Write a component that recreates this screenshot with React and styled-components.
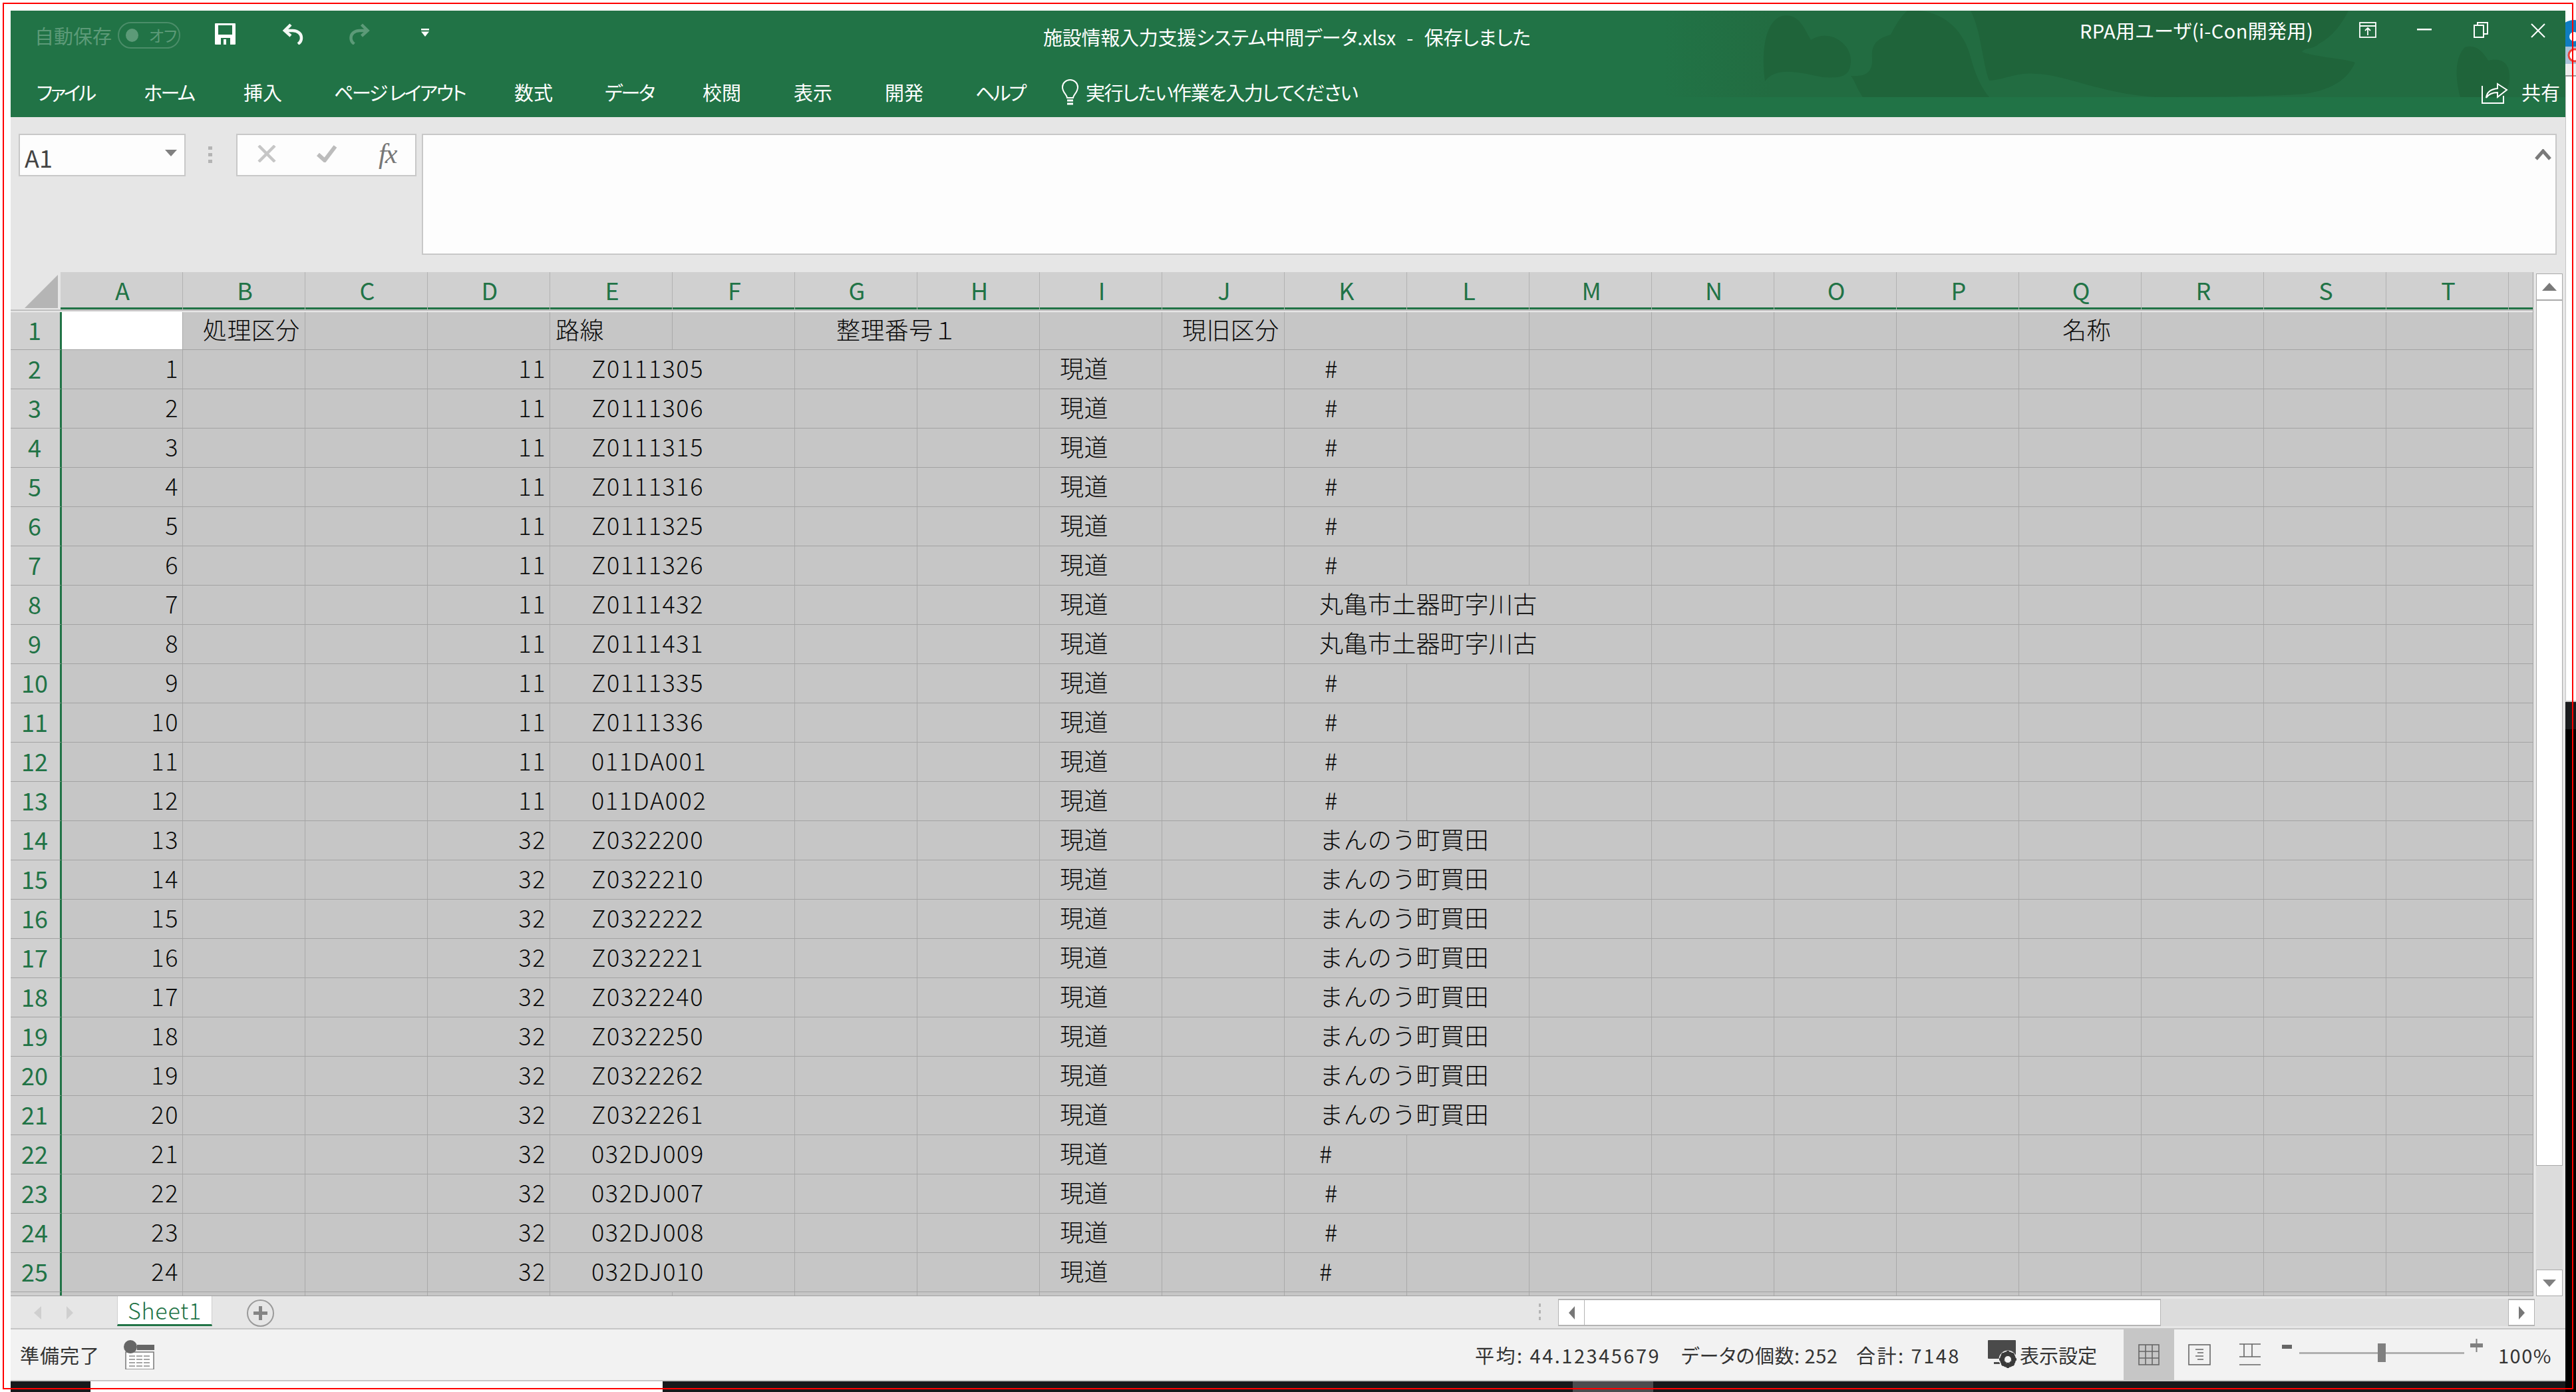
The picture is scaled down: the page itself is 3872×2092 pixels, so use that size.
import React from 'react';
import styled, { createGlobalStyle } from 'styled-components';

const FONT = '"Noto Sans CJK JP", "Noto Sans", sans-serif';

const Global = createGlobalStyle`
  html, body { margin: 0; padding: 0; background: #fff; }
  * { box-sizing: border-box; }
`;

const Page = styled.div`
  position: relative;
  width: 3872px;
  height: 2092px;
  background: #fff;
  overflow: hidden;
  font-family: ${FONT};
  display: grid;
  grid-template-columns: 16px 3840px 16px;
  grid-template-rows: 16px 2060px 16px;
`;
const RedFrame = styled.div`
  position: absolute;
  left: 4px; top: 4px; width: 3864px; height: 2084px;
  border: 2px solid #ff0000;
  pointer-events: none;
  z-index: 20;
`;
const Win = styled.div`
  grid-column: 2; grid-row: 2;
  display: flex; flex-direction: column;
  background: #e6e6e6;
`;
const RightEdge = styled.div`
  grid-column: 3; grid-row: 1 / 4;
  display: flex; flex-direction: column;
  background: #fff;
`;
const EdgeWhite = styled.div`
  height: 940px; background: #fff; border-left: 1px solid #c6c6c6; border-bottom: 2px solid #c6c6c6;
`;
const EdgeDark = styled.div`height: 41px; background: #1a1c1e;`;
const EdgeBlack = styled.div`flex: 1; background: #000;`;
const BottomStrip = styled.div`
  grid-column: 2; grid-row: 3;
  display: flex;
`;
const Strip = styled.div`
  width: ${p => p.$w}px;
  flex: ${p => (p.$grow ? 1 : 'none')};
  background: ${p => p.$c};
`;

/* ribbon */
const Ribbon = styled.div`
  position: relative;
  height: 160px;
  background: #217346;
  color: #fff;
  padding-bottom: 4px;
  font-feature-settings: "palt";
`;
const Texture = styled.svg`
  position: absolute; left: 2484px; top: 0; width: 1356px; height: 130px;
`;
const TitleRow = styled.div`
  position: relative;
  height: 64px;
  display: flex; align-items: center;
`;
const Qat = styled.div`
  width: 1552px; flex: none;
  padding-left: 36px;
  display: flex; align-items: center;
`;
const AutoLabel = styled.span`font-size: 29px; color: #5c9a78; width: 117px; white-space: nowrap; line-height: 1; padding-top: 10px;`;
const Toggle = styled.span`
  margin-left: 8px; margin-top: 10px; width: 94px; height: 40px; flex: none;
  border: 2px solid #4b8d69; border-radius: 20px;
  display: flex; align-items: center; padding-left: 10px; gap: 16px;
`;
const ToggleDot = styled.span`width: 19px; height: 20px; border-radius: 50%; background: #5c9a78;`;
const ToggleText = styled.span`font-size: 24px; color: #5c9a78; line-height: 1;`;
const QatSlot = styled.span`
  margin-left: ${p => p.$ml}px; display: flex; flex: none; margin-top: ${p => p.$mt || 6}px;
`;
const DocTitle = styled.div`
  flex: none; width: 1558px; font-size: 29px; white-space: pre; line-height: 1;
  padding-top: 14px; letter-spacing: -0.25px; word-spacing: 2px;
`;
const UserName = styled.div`
  flex: none; width: 420px; font-size: 29px; white-space: nowrap; line-height: 1; padding-bottom: 6px;
  letter-spacing: 0.4px;
`;
const WinBtn = styled.span`
  display: flex; flex: none; margin-left: ${p => p.$ml}px; padding-bottom: 6px;
`;
const TabRow = styled.div`
  position: relative;
  margin-top: 24px; height: 68px;
  padding-left: 39px;
  display: flex; align-items: center;
`;
const Tab = styled.span`
  flex: none; width: ${p => p.$w}px; margin-right: 77px;
  font-size: 29px; line-height: 1; white-space: nowrap;
  letter-spacing: ${p => p.$ls || 0}px;
`;
const Bulb = styled.span`display: flex; margin-left: -23px; margin-right: 10px; padding-top: 2px;`;
const Tell = styled.span`font-size: 29px; line-height: 1; white-space: nowrap; flex: none; letter-spacing: -1.5px;`;
const Share = styled.div`
  margin-left: auto; display: flex; align-items: center; gap: 20px; padding-right: 8px;
  font-size: 29px; line-height: 1;
`;

/* formula */
const FormulaBar = styled.div`
  height: 233px; flex: none;
  background: #e6e6e6;
  padding: 25px 13px 0 12px;
  display: flex; align-items: flex-start;
`;
const NameBox = styled.div`
  width: 251px; height: 64px; flex: none;
  background: #fdfdfd; border: 2px solid #c8c8c8;
  display: flex; align-items: center; justify-content: space-between;
  padding: 5px 11px 0 7px;
  font-size: 36px; color: #444; line-height: 1;
`;
const Caret = styled.span`
  width: 0; height: 0; margin-top: -11px;
  border-left: 9px solid transparent; border-right: 9px solid transparent;
  border-top: 10px solid #808080;
`;
const Grip = styled.div`
  width: 6px; margin: 19px 36px 0 34px; flex: none;
  display: flex; flex-direction: column; gap: 5px;
`;
const GripDot = styled.span`height: 5px; background: #b4b4b4; display: block;`;
const FxBox = styled.div`
  width: 271px; height: 64px; flex: none;
  background: #fdfdfd; border: 2px solid #c8c8c8;
  display: flex; align-items: center; padding-left: 30px; padding-bottom: 4px;
`;
const FxSpacer = styled.span`width: 60px; flex: none;`;
const FxText = styled.span`
  font-family: "Liberation Serif", serif; font-style: italic; font-size: 42px; color: #777;
  margin-left: 62px; line-height: 1; letter-spacing: -2px;
`;
const FormulaInput = styled.div`
  margin-left: 8px; flex: none; width: 3209px; height: 182px;
  background: #fdfdfd; border: 2px solid #c8c8c8;
  display: flex; justify-content: flex-end; padding: 21px 6px 0 0;
`;

/* sheet */
const SheetArea = styled.div`
  height: 1539px; flex: none; display: flex;
`;
const GridPane = styled.div`
  width: 3792px; flex: none; overflow: hidden; background: #c6c6c6;
  border-right: 1px solid #a3a3a3;
  border-bottom: 1px solid #a3a3a3;
  font-size: 36px; color: #0a0a0a;
`;
const HeadRow = styled.div`
  display: grid; grid-template-columns: 75px repeat(20, 184px) 37px;
  height: 60px;
  background: #d0d0d0;
  border-bottom: 4px solid transparent;
  background-clip: padding-box;
  box-shadow: inset 0 -3px 0 #217346;
`;
const Corner = styled.div`
  background: #e6e6e6; height: 56px; padding: 4px 4px 2px 21px;
  display: flex;
`;
const CornerTri = styled.span`
  flex: 1; background: #b5b5b5; clip-path: polygon(100% 0, 100% 100%, 0 100%);
`;
const ColHead = styled.div`
  height: 56px; border-right: 1px solid #b2b2b2;
  color: #217346; font-size: 36px; line-height: 1;
  display: flex; align-items: center; justify-content: center; padding: 0 0 4px 3px;
`;
const WhiteLine = styled.div`height: 1px; background: #fff; margin: -1px 0 0 0; position: relative;`;
const Row = styled.div`
  display: grid; grid-template-columns: 75px repeat(20, 184px) 37px;
  height: ${p => p.$h}px;
  border-bottom: 1px solid #a3a3a3;
`;
const RowHead = styled.div`
  position: relative; z-index: 2;
  width: 77px; background: #d0d0d0;
  margin-bottom: -1px;
  border-bottom: 1px solid #a3a3a3;
  border-right: 3px solid #217346;
  color: #217346; line-height: 1;
  display: flex; align-items: center; justify-content: center;
  padding: 0 2px 5px 0;
`;
const Cell = styled.div`
  position: relative;
  min-width: 0;
  background: ${p => (p.$sel ? '#fff' : 'transparent')};
  border-right: ${p => (p.$joined ? 'none' : '1px solid #a9a9a9')};
  display: flex; align-items: center;
  justify-content: ${p => (p.$right ? 'flex-end' : 'flex-start')};
  padding: 0 ${p => (p.$right ? 5 : 0)}px 6px ${p => p.$pad || 0}px;
  white-space: nowrap; line-height: 1;
`;
const CellText = styled.span`
  position: relative; z-index: 1; font-weight: 300;
  letter-spacing: ${p => (p.$num ? 1.6 : 0.4)}px;
`;

const VScroll = styled.div`
  width: 48px; flex: none; background: #e6e6e6;
  padding: 2px 4px 0 4px;
  display: flex; flex-direction: column;
`;
const ScrollBtn = styled.div`
  height: ${p => p.$h}px; flex: none; background: #fff;
  border: 1px solid #a9a9a9;
  border-bottom-width: ${p => (p.$up ? 2 : 1)}px;
  display: flex; align-items: center; justify-content: center;
`;
const TriUp = styled.span`
  width: 0; height: 0;
  border-left: 11px solid transparent; border-right: 11px solid transparent;
  border-bottom: 12px solid #7a7a7a;
`;
const TriDown = styled.span`
  width: 0; height: 0;
  border-left: 10px solid transparent; border-right: 10px solid transparent;
  border-top: 11px solid #808080;
`;
const VThumb = styled.div`
  height: 1300px; flex: none; background: #fff;
  border: 1px solid #a9a9a9; border-top: none;
`;
const VTrack = styled.div`flex: 1; background: #dcdcdc;`;

/* tabs */
const TabsBar = styled.div`
  height: 48px; flex: none; display: flex; align-items: flex-start;
  background: #e6e6e6; position: relative;
`;
const NavArrow = styled.span`
  width: 0; height: 0; flex: none;
  margin: 15px 0 0 ${p => p.$ml}px;
  border-top: 10px solid transparent; border-bottom: 10px solid transparent;
  ${p => (p.$left ? 'border-right: 11px solid #cfcfcf;' : 'border-left: 10px solid #cfcfcf;')}
`;
const SheetTab = styled.div`
  margin-left: 66px; width: 143px; height: 45px; flex: none;
  background: #fff; border: 1px solid #cfcfcf; border-top: none;
  border-bottom: 3px solid #217346;
  color: #217346; font-size: 34px; line-height: 1; font-weight: 300; letter-spacing: 0.8px;
  display: flex; align-items: center; justify-content: center;
`;
const AddSheet = styled.span`margin: 5px 0 0 52px; display: flex; flex: none;`;
const HGrip = styled.span`
  margin: 11px 26px 0 auto; width: 3px; height: 25px; flex: none;
  background: repeating-linear-gradient(#b4b4b4 0 5px, transparent 5px 10px);
`;
const HScroll = styled.div`
  width: 1468px; height: 41px; flex: none; margin: 4px 46px 0 0;
  display: flex; background: #dcdcdc;
`;
const HBtn = styled.div`
  width: ${p => p.$w}px; flex: none; background: #fff;
  border: 1px solid #b4b4b4; border-top-width: 2px; border-bottom-width: 2px;
  display: flex; align-items: center; justify-content: center;
`;
const HThumb = styled.div`
  width: 866px; flex: none; background: #fff;
  border: 1px solid #b4b4b4; border-top-width: 2px; border-bottom-width: 2px; border-left: none;
`;
const HTrack = styled.div`flex: 1;`;
const HTri = styled.span`
  width: 0; height: 0;
  border-top: 10px solid transparent; border-bottom: 10px solid transparent;
  ${p => (p.$left ? 'border-right: 9px solid #777;' : 'border-left: 9px solid #777;')}
`;

/* status */
const StatusBar = styled.div`
  height: 80px; flex: none; background: #f2f2f2;
  border-top: 2px solid #c6c6c6; border-bottom: 2px solid #c6c6c6;
  display: flex; align-items: center;
  font-size: 29px; color: #333; line-height: 1;
  font-feature-settings: "palt";
  padding-left: 14px;
`;
const StatusText = styled.span`
  flex: none; white-space: nowrap; width: ${p => p.$w}px; margin-left: ${p => p.$ml || 0}px;
  letter-spacing: ${p => p.$ls || 0}px;
`;
const StatusIcon = styled.span`
  display: flex; flex: none; margin-left: ${p => p.$ml || 0}px; margin-top: ${p => p.$mt || 0}px;
`;
const ViewActive = styled.div`
  width: 76px; height: 76px; flex: none; margin-left: ${p => p.$ml}px;
  background: #c6c6c6; display: flex; align-items: center; justify-content: center;
`;
const Zoom = styled.span`margin-left: ${p => p.$ml}px; flex: none; white-space: nowrap; letter-spacing: 1.5px;`;
const Slider = styled.div`
  position: relative; width: 248px; height: 3px; flex: none; margin-left: 11px;
  margin-top: -6px;
  background: #b0b0b0;
`;
const SliderThumb = styled.span`
  position: absolute; left: 118px; top: -13px; width: 12px; height: 28px; background: #808080;
`;

const COLS = 'ABCDEFGHIJKLMNOPQRST'.split('');
const ids = ['Z0111305','Z0111306','Z0111315','Z0111316','Z0111325','Z0111326','Z0111432','Z0111431','Z0111335','Z0111336','011DA001','011DA002','Z0322200','Z0322210','Z0322222','Z0322221','Z0322240','Z0322250','Z0322262','Z0322261','032DJ009','032DJ007','032DJ008','032DJ010'];
const nameOf = i => {
  if (i === 6 || i === 7) return '丸亀市土器町字川古';
  if (i >= 12 && i <= 19) return 'まんのう町買田';
  return '#';
};

const header = { 1: ['処理区分', 30], 4: ['路線', 8], 6: ['整理番号１', 62], 9: ['現旧区分', 30], 16: ['名称', 65] };

function HeaderRow() {
  return (
    <Row $h={57}>
      <RowHead>1</RowHead>
      {COLS.map((c, i) => (
        <Cell key={c} $sel={i === 0} $joined={i === 6} $pad={header[i] ? header[i][1] : 0}>
          {header[i] && <CellText>{header[i][0]}</CellText>}
        </Cell>
      ))}
      <Cell />
    </Row>
  );
}

function DataRow({ i }) {
  const name = nameOf(i);
  const hashPad = i === 20 || i === 23 ? 52 : 60;
  const joinKL = name !== '#';
  const joinLM = i === 6 || i === 7;
  return (
    <Row $h={59}>
      <RowHead>{i + 2}</RowHead>
      {COLS.map((c, k) => {
        if (k === 0) return <Cell key={c} $right><CellText $num>{i + 1}</CellText></Cell>;
        if (k === 3) return <Cell key={c} $right><CellText $num>{i < 12 ? 11 : 32}</CellText></Cell>;
        if (k === 4) return <Cell key={c} $joined $pad={62}><CellText $num>{ids[i]}</CellText></Cell>;
        if (k === 8) return <Cell key={c} $pad={30}><CellText>現道</CellText></Cell>;
        if (k === 10) return <Cell key={c} $joined={joinKL} $pad={name === '#' ? hashPad : 52}><CellText>{name}</CellText></Cell>;
        if (k === 11) return <Cell key={c} $joined={joinLM} />;
        return <Cell key={c} />;
      })}
      <Cell />
    </Row>
  );
}

const SaveIcon = () => (
  <svg width="31" height="32" viewBox="0 0 31 32">
    <path fill="#fff" d="M1 0h29a1 1 0 0 1 1 1v30a1 1 0 0 1-1 1H1a1 1 0 0 1-1-1V1a1 1 0 0 1 1-1z" />
    <rect x="5" y="3" width="21" height="14" fill="#217346" />
    <rect x="9" y="22" width="14" height="10" fill="#217346" />
    <rect x="13" y="24" width="4" height="8" fill="#fff" />
  </svg>
);
const UndoIcon = ({ c }) => (
  <svg width="32" height="32" viewBox="0 0 32 32" fill="none" stroke={c} strokeWidth="4.5">
    <path d="M13 2 L4 11 L13 19" />
    <path d="M5 11 H16 C24 11 29 16 29 22 C29 26 27 29 24 31" />
  </svg>
);
const RedoIcon = ({ c }) => (
  <svg width="33" height="32" viewBox="0 0 32 32" fill="none" stroke={c} strokeWidth="4.5">
    <path d="M19 2 L28 11 L19 19" />
    <path d="M27 11 H16 C8 11 3 16 3 22 C3 26 5 29 8 31" />
  </svg>
);
const CustomizeIcon = () => (
  <svg width="12" height="12" viewBox="0 0 12 12">
    <rect x="0" y="0" width="12" height="2.5" fill="#fff" />
    <path d="M0 4.5H12L6 12Z" fill="#fff" />
  </svg>
);
const DisplayIcon = () => (
  <svg width="26" height="24" viewBox="0 0 26 24" fill="none" stroke="#fff" strokeWidth="1.8">
    <rect x="1" y="1" width="24" height="22" />
    <path d="M1 6H25M13 20V10M9 13l4-4 4 4" />
  </svg>
);
const MinIcon = () => (
  <svg width="22" height="24" viewBox="0 0 22 24"><rect x="0" y="10" width="22" height="2.5" fill="#fff" /></svg>
);
const RestoreIcon = () => (
  <svg width="22" height="24" viewBox="0 0 22 24" fill="none" stroke="#fff" strokeWidth="2">
    <rect x="1" y="5" width="14" height="18" />
    <path d="M6 5V1H21V18H15" />
  </svg>
);
const CloseIcon = () => (
  <svg width="22" height="24" viewBox="0 0 22 24" fill="none" stroke="#fff" strokeWidth="2">
    <path d="M1 3L21 23M21 3L1 23" />
  </svg>
);
const ShareIcon = () => (
  <svg width="40" height="36" viewBox="0 0 40 36" fill="none" stroke="#fff" strokeWidth="2">
    <path d="M1 9V35H33V24" />
    <path d="M7 27C8 18 14 14 24 13V6L38 15L24 26V19C17 19 11 21 7 27Z" />
  </svg>
);
const BulbIcon = () => (
  <svg width="27" height="40" viewBox="0 0 27 40" fill="none" stroke="#fff" strokeWidth="2">
    <path d="M9 28C8 22 2 20 2 12C2 6 7 1 13.5 1S25 6 25 12C25 20 19 22 18 28Z" />
    <path d="M9 32H18M9 37H18" strokeWidth="3" />
  </svg>
);
const CrossIcon = () => (
  <svg width="28" height="26" viewBox="0 0 28 26" fill="none" stroke="#c6c6c6" strokeWidth="4.5">
    <path d="M2 1L26 25M26 1L2 25" />
  </svg>
);
const CheckIcon = () => (
  <svg width="32" height="26" viewBox="0 0 32 26" fill="none" stroke="#bcbcbc" strokeWidth="6">
    <path d="M3 14L13 23L29 2" />
  </svg>
);
const ChevronUp = () => (
  <svg width="25" height="17" viewBox="0 0 25 17" fill="none" stroke="#7a7a7a" strokeWidth="5">
    <path d="M2 15L12.5 3L23 15" />
  </svg>
);
const AddIcon = () => (
  <svg width="41" height="41" viewBox="0 0 41 41">
    <circle cx="20.5" cy="20.5" r="19.5" fill="none" stroke="#9a9a9a" strokeWidth="2" />
    <path d="M20.5 10V31M10 20.5H31" stroke="#858585" strokeWidth="5" />
  </svg>
);
const MacroIcon = () => (
  <svg width="46" height="44" viewBox="0 0 46 44">
    <rect x="3" y="18" width="42" height="26" fill="#fff" stroke="#777" strokeWidth="1.5" />
    <path d="M8 24H41M8 29H41M8 34H41M8 39H41" stroke="#888" strokeWidth="1.5" strokeDasharray="9 2" />
    <rect x="20" y="7" width="26" height="8" fill="#666" />
    <ellipse cx="10" cy="10" rx="10" ry="10" fill="#666" />
  </svg>
);
const DisplaySettingsIcon = () => (
  <svg width="48" height="44" viewBox="0 0 48 44">
    <rect x="0" y="0" width="42" height="28" rx="1" fill="#4a4a4a" />
    <rect x="9" y="33" width="9" height="3" fill="#4a4a4a" />
    <circle cx="30" cy="29" r="10" fill="none" stroke="#f2f2f2" strokeWidth="7" />
    <circle cx="30" cy="29" r="9" fill="none" stroke="#3a3a3a" strokeWidth="6" />
    <path d="M30 16V42M17 29H43M21 20L39 38M39 20L21 38" stroke="#3a3a3a" strokeWidth="3.5" />
    <circle cx="30" cy="29" r="5" fill="#f2f2f2" />
  </svg>
);
const NormalIcon = () => (
  <svg width="32" height="32" viewBox="0 0 32 32" fill="none" stroke="#666" strokeWidth="1.6">
    <rect x="1" y="1" width="30" height="30" />
    <path d="M1 11H31M1 21H31M11 1V31M21 1V31" />
  </svg>
);
const LayoutIcon = () => (
  <svg width="34" height="32" viewBox="0 0 34 32" fill="none" stroke="#666" strokeWidth="1.6">
    <rect x="1" y="1" width="32" height="30" />
    <path d="M11 8H23M14 13H23M11 18H23M14 23H23" />
  </svg>
);
const BreakIcon = () => (
  <svg width="34" height="34" viewBox="0 0 34 34" fill="none" stroke="#666" strokeWidth="1.6">
    <path d="M1 1H33M1 20H33M1 32H33M8 1V20M20 1V20" />
  </svg>
);
const MinusSmall = () => (
  <svg width="15" height="6" viewBox="0 0 15 6"><rect width="15" height="6" fill="#666" /></svg>
);
const PlusSmall = () => (
  <svg width="19" height="20" viewBox="0 0 19 20"><path d="M0 7h19v6H0zM8.5 0h2v20h-2z" fill="#808080" /></svg>
);
const Blobs = () => (
  <Texture viewBox="0 0 1356 130" preserveAspectRatio="none">
    <defs>
      <linearGradient id="fade" x1="0" x2="1" y1="0" y2="0">
        <stop offset="0" stopColor="#217346" />
        <stop offset="0.12" stopColor="#226c41" />
      </linearGradient>
    </defs>
    <rect x="0" y="0" width="1356" height="130" fill="url(#fade)" />
    <path fill="#1f643a" d="M153 106C148 70 150 18 178 8C205 2 213 30 222 44C250 26 282 50 282 74C282 98 270 102 240 100C200 92 170 84 153 106Z" />
    <path fill="#1f643a" d="M367 0C420 -4 452 30 462 70C470 100 480 118 490 130H300C290 115 288 105 282 98C310 100 315 88 314 70C312 45 330 40 342 36C350 20 358 8 367 0Z" />
    <path fill="#1f643a" d="M462 0H1030C1020 20 1005 40 985 50C978 58 965 55 960 62C980 70 1025 72 1040 78C1030 100 1010 118 965 125C900 130 800 130 740 130C660 125 600 95 560 95C530 92 510 105 490 105C480 80 478 30 462 0Z" />
    <path fill="#1f643a" d="M1198 130C1190 100 1190 70 1205 55C1222 50 1232 62 1240 75C1262 70 1274 80 1272 105C1270 120 1262 128 1255 130Z" />
  </Texture>
);

export default function App() {
  return (
    <Page>
      <Global />
      <Win>
        <Ribbon>
          <Blobs />
          <TitleRow>
            <Qat>
              <AutoLabel>自動保存</AutoLabel>
              <Toggle><ToggleDot /><ToggleText>オフ</ToggleText></Toggle>
              <QatSlot $ml={52}><SaveIcon /></QatSlot>
              <QatSlot $ml={70}><UndoIcon c="#f4f8f5" /></QatSlot>
              <QatSlot $ml={68}><RedoIcon c="#5c9a78" /></QatSlot>
              <QatSlot $ml={76} $mt={1}><CustomizeIcon /></QatSlot>
            </Qat>
            <DocTitle>施設情報入力支援システム中間データ.xlsx  -  保存しました</DocTitle>
            <UserName>RPA用ユーザ(i-Con開発用)</UserName>
            <WinBtn $ml={0}><DisplayIcon /></WinBtn>
            <WinBtn $ml={61}><MinIcon /></WinBtn>
            <WinBtn $ml={63}><RestoreIcon /></WinBtn>
            <WinBtn $ml={64}><CloseIcon /></WinBtn>
          </TitleRow>
          <TabRow>
            <Tab $w={84} $ls={-3.5}>ファイル</Tab>
            <Tab $w={73} $ls={-2.5}>ホーム</Tab>
            <Tab $w={59}>挿入</Tab>
            <Tab $w={194} $ls={-2.4}>ページ レイアウト</Tab>
            <Tab $w={59}>数式</Tab>
            <Tab $w={70} $ls={-2.5}>データ</Tab>
            <Tab $w={60}>校閲</Tab>
            <Tab $w={60}>表示</Tab>
            <Tab $w={59}>開発</Tab>
            <Tab $w={75} $ls={-3}>ヘルプ</Tab>
            <Bulb><BulbIcon /></Bulb>
            <Tell>実行したい作業を入力してください</Tell>
            <Share><ShareIcon />共有</Share>
          </TabRow>
        </Ribbon>

        <FormulaBar>
          <NameBox>A1<Caret /></NameBox>
          <Grip><GripDot /><GripDot /><GripDot /></Grip>
          <FxBox>
            <CrossIcon />
            <FxSpacer />
            <CheckIcon />
            <FxText>fx</FxText>
          </FxBox>
          <FormulaInput><ChevronUp /></FormulaInput>
        </FormulaBar>

        <SheetArea>
          <GridPane>
            <HeadRow>
              <Corner><CornerTri /></Corner>
              {COLS.map(c => <ColHead key={c}>{c}</ColHead>)}
              <ColHead />
            </HeadRow>
            <WhiteLine />
            <HeaderRow />
            {ids.map((_, i) => <DataRow key={i} i={i} />)}
            <Row $h={59}>
              <RowHead />
              {COLS.map(c => <Cell key={c} />)}
              <Cell />
            </Row>
          </GridPane>
          <VScroll>
            <ScrollBtn $h={41} $up><TriUp /></ScrollBtn>
            <VThumb />
            <VTrack />
            <ScrollBtn $h={40}><TriDown /></ScrollBtn>
          </VScroll>
        </SheetArea>

        <TabsBar>
          <NavArrow $left $ml={35} />
          <NavArrow $ml={38} />
          <SheetTab>Sheet1</SheetTab>
          <AddSheet><AddIcon /></AddSheet>
          <HGrip />
          <HScroll>
            <HBtn $w={40}><HTri $left /></HBtn>
            <HThumb />
            <HTrack />
            <HBtn $w={40}><HTri /></HBtn>
          </HScroll>
        </TabsBar>

        <StatusBar>
          <StatusText $w={118} $ls={1}>準備完了</StatusText>
          <StatusIcon $ml={38}><MacroIcon /></StatusIcon>
          <StatusText $w={283} $ml={1985} $ls={2.5}>平均: 44.12345679</StatusText>
          <StatusText $w={233} $ml={27} $ls={0.5}>データの個数: 252</StatusText>
          <StatusText $w={157} $ml={30} $ls={2.5}>合計: 7148</StatusText>
          <StatusIcon $ml={41}><DisplaySettingsIcon /></StatusIcon>
          <StatusText $w={120} $ml={0}>表示設定</StatusText>
          <ViewActive $ml={36}><NormalIcon /></ViewActive>
          <StatusIcon $ml={21}><LayoutIcon /></StatusIcon>
          <StatusIcon $ml={42}><BreakIcon /></StatusIcon>
          <StatusIcon $ml={31} $mt={-24}><MinusSmall /></StatusIcon>
          <Slider $ml={13}><SliderThumb /></Slider>
          <StatusIcon $ml={9} $mt={-28}><PlusSmall /></StatusIcon>
          <Zoom $ml={23}>100%</Zoom>
        </StatusBar>
      </Win>

      <BottomStrip>
        <Strip $w={120} $c="#17191b" />
        <Strip $w={860} $c="#fff" />
        <Strip $w={1368} $c="#17191b" />
        <Strip $w={121} $c="#4c4c4e" />
        <Strip $grow $c="#17191b" />
      </BottomStrip>
      <RightEdge>
        <svg width="16" height="115" viewBox="0 0 16 115" style={{ flex: 'none', display: 'block' }}>
          <rect width="16" height="115" fill="#fff" />
          <circle cx="13" cy="55" r="25" fill="#0f7dc2" />
          <circle cx="13" cy="55" r="7" fill="#fff" />
          <rect y="70" width="16" height="26" fill="#a9c3d9" />
          <circle cx="14" cy="83" r="9" fill="#fff" stroke="#e8453c" strokeWidth="3" />
          <rect y="96" width="16" height="17" fill="#eeeeee" />
          <rect y="113" width="16" height="2" fill="#9a9a9a" />
        </svg>
        <EdgeWhite />
        <EdgeDark />
        <EdgeBlack />
      </RightEdge>
      <RedFrame />
    </Page>
  );
}
